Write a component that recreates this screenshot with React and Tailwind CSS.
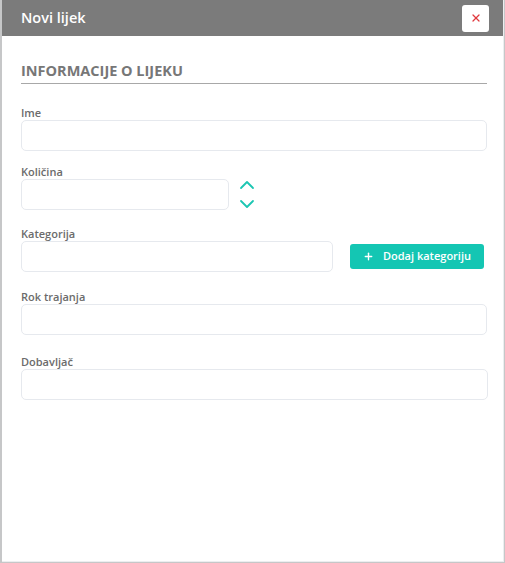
import { ChevronUp, ChevronDown, Plus, X } from 'lucide-react'

function Field({ label, className = '', children }) {
  return (
    <div className={className}>
      <label className="block text-[11px] font-semibold text-[#6b6b6b] leading-[14px]">{label}</label>
      {children}
    </div>
  )
}

const inputCls = 'h-[31px] rounded-[5px] border border-[#e6e9ee] bg-white outline-none px-2 text-sm'

export default function App() {
  return (
    <div className="min-h-screen bg-[#c6c7c8] flex font-['Open_Sans',sans-serif]">
      <div className="ml-[2px] w-[502px] h-[562px] bg-white border-r border-b border-[#eceef0] flex flex-col">
        {/* Header */}
        <header className="h-[36px] bg-[#7b7b7b] flex items-center justify-between pl-[19px] pr-[14px]">
          <h1 className="text-[14.5px] font-semibold text-white">Novi lijek</h1>
          <button className="w-[27px] h-[27px] bg-white rounded-[3px] flex items-center justify-center">
            <X className="w-[12px] h-[12px] text-[#e0393e]" strokeWidth={2.5} />
          </button>
        </header>

        {/* Body */}
        <div className="px-[19px] pt-[25px]">
          <div className="border-b border-[#a8a8a8] pb-[2px] w-[466px]">
            <h2 className="text-[14.5px] font-bold text-[#777] leading-[20px]">INFORMACIJE O LIJEKU</h2>
          </div>

          <Field label="Ime" className="mt-[22px]">
            <input className={`${inputCls} w-[466px]`} />
          </Field>

          <Field label="Količina" className="mt-[14px]">
            <div className="flex items-start">
              <input className={`${inputCls} w-[208px]`} />
              {/* stepper arrows overflow the row on purpose */}
              <div className="ml-[6px] h-[31px] flex flex-col justify-center">
                <ChevronUp className="shrink-0 w-[24px] h-[24px] text-[#1cc6b2] -mb-[5px]" strokeWidth={1.8} />
                <ChevronDown className="shrink-0 w-[24px] h-[24px] text-[#1cc6b2]" strokeWidth={1.8} />
              </div>
            </div>
          </Field>

          <Field label="Kategorija" className="mt-[17px]">
            <div className="flex items-center">
              <input className={`${inputCls} w-[312px]`} />
              <button className="ml-[17px] w-[134px] h-[25px] rounded-[3px] bg-[#14c6b3] text-white text-[11px] font-semibold flex items-center pl-[13px]">
                <Plus className="w-[11px] h-[11px]" strokeWidth={3} />
                <span className="ml-[9px]">Dodaj kategoriju</span>
              </button>
            </div>
          </Field>

          <Field label="Rok trajanja" className="mt-[18px]">
            <input className={`${inputCls} w-[466px]`} />
          </Field>

          <Field label="Dobavljač" className="mt-[20px]">
            <input className={`${inputCls} w-[467px]`} />
          </Field>
        </div>
      </div>
    </div>
  )
}
